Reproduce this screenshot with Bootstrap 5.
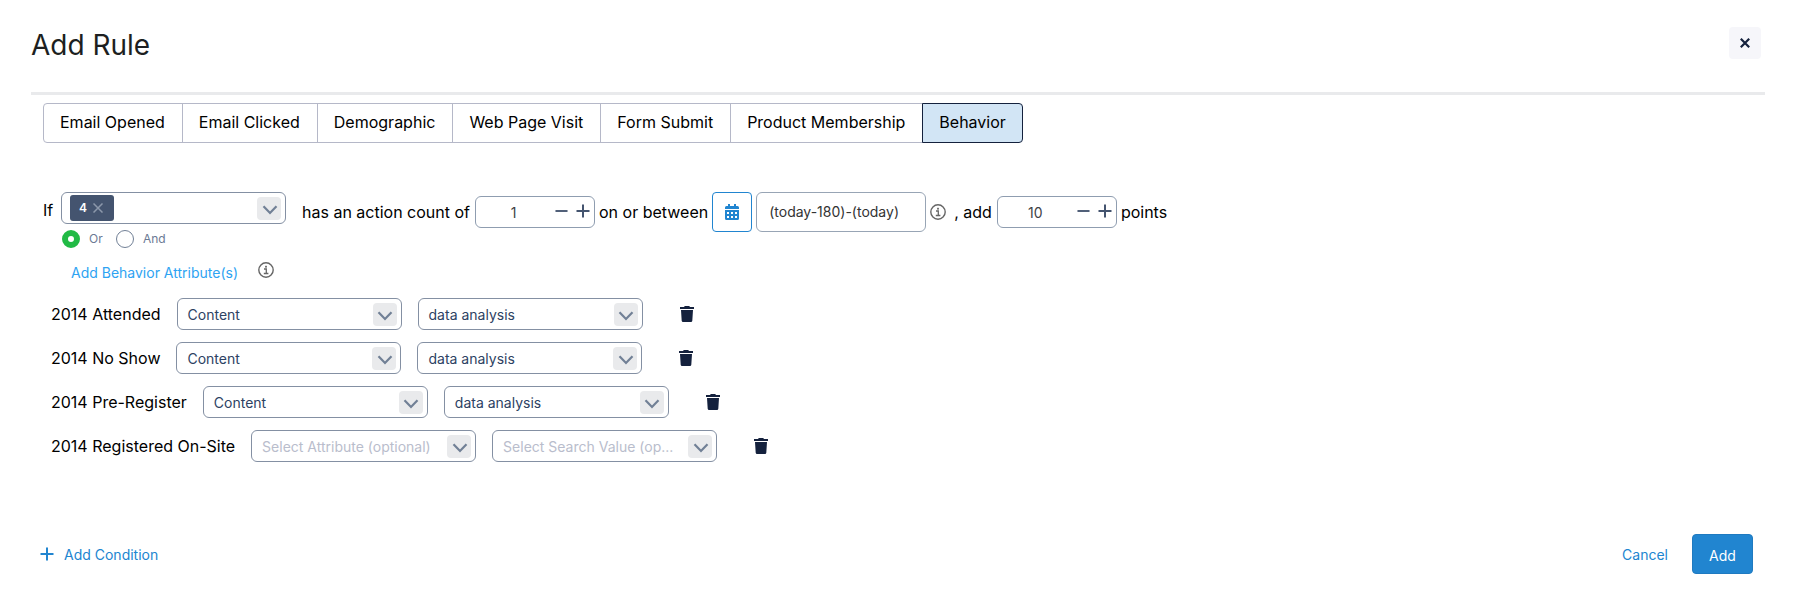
<!DOCTYPE html>
<html lang="en">
<head>
<meta charset="utf-8">
<meta name="viewport" content="width=device-width, initial-scale=1">
<title>Add Rule</title>
<link rel="stylesheet" href="https://cdn.jsdelivr.net/npm/bootstrap@5.3.0/dist/css/bootstrap.min.css">
<style>
  body { font-family: Inter, sans-serif; font-size: 16px; line-height: 24px; color: #000; background: #fff; }
  .dialog { height: 595px; padding: 0 30px 0 31px; overflow: hidden; }
  .dialog-head { height: 95px; border-bottom: 3px solid #e9eaec; padding: 27px 4px 0 0; }
  .dialog-title { font-size: 28px; line-height: 36px; font-weight: 400; color: #1d1f21; margin: 0; }
  .close-btn { width: 32px; height: 32px; border-radius: 4px; background: #f6f6fa; color: #14213d; }
  .tabs { margin: 8px 0 0 12px; }
  .tabs .btn { height: 40px; padding: 0 17px 2px 16px; line-height: 36px; font-size: 16px; color: #000; border: 1px solid #b5b8c8; border-radius: 4px; background: #fff; }
  .tabs .btn.active { background: #d2e5f5; border-color: #14213d; color: #000; padding-right: 16px; }
  .rule { margin: 49px 0 0 12px; height: 40px; white-space: nowrap; }
  .picker { width: 225px; height: 32px; border: 1px solid #8490a3; border-radius: 6px; background: #fff; color: #2d4263; font-size: 14px; padding: 1px 4px 0 10px; }
  .picker .arrow { width: 24px; height: 23px; padding: 2px 0 0 1px; border-radius: 4px; background: #e9eaec; color: #718096; }
  .picker.blank { color: #b9bdcc; }
  .chip { width: 44px; height: 26px; border-radius: 3px; background: #44546f; color: #fff; font-size: 12px; font-weight: 600; margin: 0 0 1px -2px; padding: 0 11px 0 9px; }
  .stepper { width: 120px; height: 32px; border: 1px solid #8f9db0; border-radius: 6px; color: #3f3f46; font-size: 14px; padding: 1px 4px 0 0; }
  .stepper .num { width: 75px; text-align: center; }
  .before-field { margin-right: 5px; }
  .cal { width: 40px; height: 40px; border: 1px solid #2185d0; border-radius: 4px; color: #2185d0; background: #fff; }
  .range { width: 170px; height: 40px; border: 1px solid #98a5b5; border-radius: 6px; color: #333; font-size: 14px; padding-left: 12px; }
  .match { margin: -2px 0 0 31px; height: 18px; font-size: 12px; line-height: 18px; color: #6b7a94; }
  .dot { width: 18px; height: 18px; border-radius: 50%; border: 1px solid #718096; }
  .dot.on { border: 6px solid #21ba45; }
  .attr-link { margin: 12px 0 0 40px; height: 24px; font-size: 14px; }
  .attr-link a { color: #2ea3f2; text-decoration: none; padding-top: 2px; }
  .lines { margin: 14px 0 0 20px; row-gap: 12px; }
  .line-row { height: 32px; column-gap: 16px; white-space: nowrap; }
  .trash { margin-left: 21px; color: #14213d; }
  .foot { margin: 72px 12px 0 9px; height: 40px; font-size: 14px; }
  .foot a { color: #2185d0; text-decoration: none; padding-top: 2px; }
  .foot a svg { margin: 0 10px 2px 0; }
  .foot .btn { width: 61px; height: 40px; font-size: 14px; padding: 2px 0 0; color: #fff; background: #2185d0; border: 1px solid #1f7ac0; border-radius: 4px; }
  svg { display: block; flex: none; }
</style>
</head>
<body>
<svg width="0" height="0" class="position-absolute">
  <symbol id="down" viewBox="0 0 16 10"><path d="M1.500 1.200 8 7.900l6.500-6.700" fill="none" stroke="currentColor" stroke-width="2.200"/></symbol>
  <symbol id="info" viewBox="0 0 16 16"><circle cx="8" cy="8" r="7.200" fill="none" stroke="currentColor" stroke-width="1.400"/><path d="M6 7h2.300v4.300M5.800 11.500h4.600" fill="none" stroke="currentColor" stroke-width="1.300"/><rect x="7.100" y="3.800" width="1.800" height="1.800" fill="currentColor"/></symbol>
  <symbol id="bin" viewBox="0 0 14 16"><path d="M0 1h4l.8-1h4.400l.8 1h4v2H0zM1 4h12l-.7 10.700A1.400 1.400 0 0 1 10.900 16H3.100a1.400 1.400 0 0 1-1.400-1.300z" fill="currentColor"/></symbol>
  <symbol id="minus" viewBox="0 0 14 14"><path d="M.5 7h13" stroke="currentColor" stroke-width="2"/></symbol>
  <symbol id="plus" viewBox="0 0 14 14"><path d="M.5 7h13M7 .5v13" stroke="currentColor" stroke-width="2"/></symbol>
</svg>
<main class="dialog">
  <header class="dialog-head d-flex justify-content-between align-items-start">
    <h1 class="dialog-title">Add Rule</h1>
    <button class="close-btn btn p-0 border-0 d-flex align-items-center justify-content-center" aria-label="Close">
      <svg width="10" height="10" viewBox="0 0 10 10"><path d="m.8.8 8.400 8.400m0-8.400L.8 9.200" stroke="currentColor" stroke-width="2.200"/></svg>
    </button>
  </header>

  <div class="tabs btn-group">
    <button class="btn">Email Opened</button>
    <button class="btn">Email Clicked</button>
    <button class="btn">Demographic</button>
    <button class="btn">Web Page Visit</button>
    <button class="btn">Form Submit</button>
    <button class="btn">Product Membership</button>
    <button class="btn active">Behavior</button>
  </div>

  <section class="rule d-flex align-items-center">
    <span style="width:18px" class="pb-1 flex-shrink-0">If</span>
    <div class="picker d-flex align-items-center justify-content-between align-self-start flex-shrink-0">
      <span class="chip d-flex align-items-center justify-content-between">4
        <svg width="10" height="10" viewBox="0 0 10 10"><path d="m.5.5 9 9m0-9-9 9" stroke="#8c98ab" stroke-width="1.500"/></svg>
      </span>
      <span class="arrow d-flex align-items-center justify-content-center"><svg width="16" height="10"><use href="#down"/></svg></span>
    </div>
    <span class="ms-3 before-field">has an action count of</span>
    <div class="stepper d-flex align-items-center"><span class="num">1</span>
      <span class="d-flex ms-auto gap-2 pb-1" style="color:#44546f"><svg width="13" height="14"><use href="#minus"/></svg><svg width="14" height="14"><use href="#plus"/></svg></span></div>
    <span class="mx-1">on or between</span>
    <button class="cal btn p-0 d-flex align-items-center justify-content-center" aria-label="Pick dates">
      <svg width="14" height="16" viewBox="0 0 14 16"><path d="M0 5V3.500A1.500 1.500 0 0 1 1.500 2H3V0h2v2h4V0h2v2h1.500A1.500 1.500 0 0 1 14 3.500V5zM0 6h14v8.500a1.500 1.500 0 0 1-1.500 1.500h-11A1.500 1.500 0 0 1 0 14.500z" fill="currentColor"/><path d="M2 8h2v2H2zm4 0h2v2H6zm4 0h2v2h-2zM2 12h2v2H2zm4 0h2v2H6zm4 0h2v2h-2z" fill="#fff"/></svg>
    </button>
    <div class="range ms-1 d-flex align-items-center">(today-180)-(today)</div>
    <svg class="ms-1" width="16" height="16" style="color:#666"><use href="#info"/></svg>
    <span class="ms-2 before-field">, add</span>
    <div class="stepper d-flex align-items-center"><span class="num">10</span>
      <span class="d-flex ms-auto gap-2 pb-1" style="color:#44546f"><svg width="13" height="14"><use href="#minus"/></svg><svg width="14" height="14"><use href="#plus"/></svg></span></div>
    <span class="ms-1">points</span>
  </section>

  <div class="match d-flex">
    <span class="dot on"></span><span style="width:36px;padding-left:9px">Or</span>
    <span class="dot"></span><span style="padding-left:9px">And</span>
  </div>

  <div class="attr-link d-flex align-items-center">
    <a href="#">Add Behavior Attribute(s)</a>
    <svg class="mb-1" width="16" height="16" style="color:#666;margin-left:20px"><use href="#info"/></svg>
  </div>

  <section class="lines d-flex flex-column">
    <div class="line-row d-flex align-items-center"><span>2014 Attended</span>
      <div class="picker d-flex align-items-center justify-content-between">Content<span class="arrow d-flex align-items-center justify-content-center"><svg width="16" height="10"><use href="#down"/></svg></span></div>
      <div class="picker d-flex align-items-center justify-content-between">data analysis<span class="arrow d-flex align-items-center justify-content-center"><svg width="16" height="10"><use href="#down"/></svg></span></div>
      <svg class="trash" width="14" height="16"><use href="#bin"/></svg></div>
    <div class="line-row d-flex align-items-center"><span>2014 No Show</span>
      <div class="picker d-flex align-items-center justify-content-between">Content<span class="arrow d-flex align-items-center justify-content-center"><svg width="16" height="10"><use href="#down"/></svg></span></div>
      <div class="picker d-flex align-items-center justify-content-between">data analysis<span class="arrow d-flex align-items-center justify-content-center"><svg width="16" height="10"><use href="#down"/></svg></span></div>
      <svg class="trash" width="14" height="16"><use href="#bin"/></svg></div>
    <div class="line-row d-flex align-items-center"><span>2014 Pre-Register</span>
      <div class="picker d-flex align-items-center justify-content-between">Content<span class="arrow d-flex align-items-center justify-content-center"><svg width="16" height="10"><use href="#down"/></svg></span></div>
      <div class="picker d-flex align-items-center justify-content-between">data analysis<span class="arrow d-flex align-items-center justify-content-center"><svg width="16" height="10"><use href="#down"/></svg></span></div>
      <svg class="trash" width="14" height="16"><use href="#bin"/></svg></div>
    <div class="line-row d-flex align-items-center"><span>2014 Registered On-Site</span>
      <div class="picker blank d-flex align-items-center justify-content-between">Select Attribute (optional)<span class="arrow d-flex align-items-center justify-content-center"><svg width="16" height="10"><use href="#down"/></svg></span></div>
      <div class="picker blank d-flex align-items-center justify-content-between">Select Search Value (op...<span class="arrow d-flex align-items-center justify-content-center"><svg width="16" height="10"><use href="#down"/></svg></span></div>
      <svg class="trash" width="14" height="16"><use href="#bin"/></svg></div>
  </section>

  <footer class="foot d-flex align-items-center">
    <a href="#" class="d-flex align-items-center"><svg width="14" height="14"><use href="#plus"/></svg>Add Condition</a>
    <a href="#" class="ms-auto me-4">Cancel</a>
    <button class="btn">Add</button>
  </footer>
</main>
<script src="https://cdn.jsdelivr.net/npm/bootstrap@5.3.0/dist/js/bootstrap.bundle.min.js"></script>
</body>
</html>
